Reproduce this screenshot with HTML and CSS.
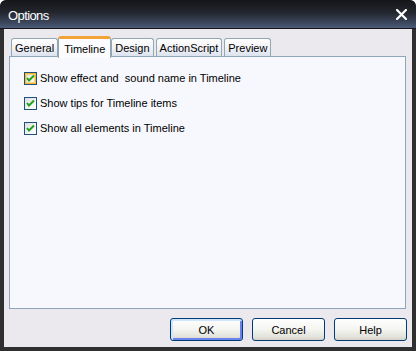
FILE: index.html
```html
<!DOCTYPE html>
<html>
<head>
<meta charset="utf-8">
<link rel="stylesheet" href="styles.css">
</head>
<body>
<div class="window">
  <div class="titlebar">
    <span class="title">Options</span>
    <svg class="close" width="11" height="11" viewBox="0 0 11 11"><path d="M1 1 L10 10 M10 1 L1 10" stroke="#fff" stroke-width="2.2" stroke-linecap="square"/></svg>
  </div>
  <div class="client">
    <div class="tabs">
      <div class="tab">General</div>
      <div class="tab active">Timeline</div>
      <div class="tab">Design</div>
      <div class="tab">ActionScript</div>
      <div class="tab">Preview</div>
    </div>
    <div class="panel">
      <label class="check">
        <span class="box hot"><svg width="13" height="13" viewBox="0 0 13 13"><path d="M3 6 L5 8.5 L10 3.5" fill="none" stroke="#21a121" stroke-width="2"/></svg></span>
        <span>Show effect and&nbsp; sound name in Timeline</span>
      </label>
      <label class="check">
        <span class="box"><svg width="13" height="13" viewBox="0 0 13 13"><path d="M3 6 L5 8.5 L10 3.5" fill="none" stroke="#21a121" stroke-width="2"/></svg></span>
        <span>Show tips for Timeline items</span>
      </label>
      <label class="check">
        <span class="box"><svg width="13" height="13" viewBox="0 0 13 13"><path d="M3 6 L5 8.5 L10 3.5" fill="none" stroke="#21a121" stroke-width="2"/></svg></span>
        <span>Show all elements in Timeline</span>
      </label>
    </div>
    <div class="buttons">
      <button class="btn default">OK</button>
      <button class="btn">Cancel</button>
      <button class="btn">Help</button>
    </div>
  </div>
</div>
</body>
</html>
```

FILE: styles.css
```css
html, body {
  margin: 0;
  padding: 0;
  background: #ffffff;
}
body {
  width: 416px;
  height: 351px;
  font-family: "Liberation Sans", Arial, sans-serif;
  font-size: 11px;
  color: #000;
}
.window {
  width: 416px;
  height: 351px;
  box-sizing: border-box;
  background: #2f2f2f;
  border-radius: 6px 6px 0 0;
  padding: 0 4px 4px 4px;
  display: flex;
  flex-direction: column;
  overflow: hidden;
}
.titlebar {
  height: 28px;
  margin: 0 -4px;
  padding: 0 9px 0 8px;
  display: flex;
  align-items: center;
  justify-content: space-between;
  background: linear-gradient(to bottom, #15161a 0%, #23262e 45%, #3f4a62 85%, #4d5a78 100%);
  border-radius: 6px 6px 0 0;
  border-bottom: 1px solid #15161a;
}
.title {
  color: #ffffff;
  font-family: "Liberation Sans", sans-serif;
  font-size: 13px;
  letter-spacing: -0.6px;
  padding-top: 2px;
}
.close {
  display: block;
  margin-top: 1px;
}
.client {
  flex: 1;
  background: #ece9ee;
  padding: 8px 6px 6px 5px;
  display: flex;
  flex-direction: column;
}
.tabs {
  display: flex;
  align-items: flex-end;
  padding-left: 2px;
  height: 19px;
  position: relative;
  z-index: 1;
}
.tab {
  height: 18px;
  box-sizing: border-box;
  padding: 3px 3px 0 3px;
  border: 1px solid #91a7b4;
  border-bottom: none;
  border-radius: 3px 3px 0 0;
  background: linear-gradient(to bottom, #ffffff 0%, #f3f3f7 50%, #dce3ef 100%);
  margin-right: 2px;
  white-space: nowrap;
}
.tab.active {
  height: 22px;
  margin-bottom: -2px;
  padding-top: 4px;
  background: #fcfcfe;
  border-top: 3px solid #f2a33a;
  margin-left: -2px;
  margin-right: 0;
  padding-left: 5px;
  padding-right: 5px;
}
.panel {
  height: 253px;
  box-sizing: border-box;
  background: #f7f8fd;
  border: 1px solid #8fa5b9;
  padding: 14px 0 0 14px;
  display: flex;
  flex-direction: column;
  gap: 11px;
}
.check {
  display: flex;
  align-items: center;
  gap: 3px;
  height: 14px;
}
.box {
  width: 13px;
  height: 13px;
  box-sizing: border-box;
  border: 1px solid #1c5180;
  background: linear-gradient(135deg, #dcdcd7 0%, #f4f4f1 60%, #ffffff 100%);
  position: relative;
  display: block;
}
.box.hot {
  box-shadow: inset 0 0 0 1px #f8b636, inset 0 0 0 2px #fbd77c;
}
.box svg {
  position: absolute;
  left: -1px;
  top: -1px;
}
.buttons {
  display: flex;
  justify-content: flex-end;
  gap: 9px;
  margin-top: 9px;
  margin-right: -1px;
}
.btn {
  width: 73px;
  height: 23px;
  font-family: "Liberation Sans", Arial, sans-serif;
  font-size: 11px;
  color: #000;
  border: 1px solid #003c74;
  border-radius: 3px;
  background: linear-gradient(to bottom, #ffffff 0%, #f4f4f0 50%, #e3e3dc 85%, #d6d0c5 100%);
  padding: 0;
}
.btn.default {
  box-shadow: inset 1px 1px 0 1px #cee7ff, inset -1px -1px 0 1px #6982ee;
}
```
